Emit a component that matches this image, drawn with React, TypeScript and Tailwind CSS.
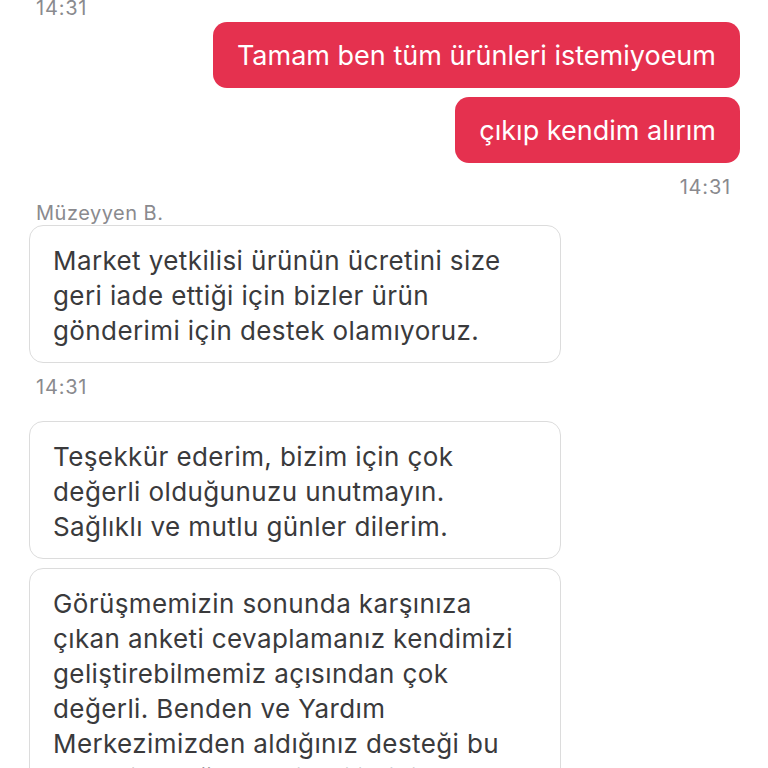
import React from "react";

const font = { fontFamily: "Inter, 'Noto Sans', sans-serif" };

const Outgoing: React.FC<{ text: string }> = ({ text }) => (
  <div className="flex justify-end pr-[28px]">
    <div className="rounded-[14px] bg-[#e5314f] px-[24px] h-[66px] flex items-center text-[27px] leading-none text-white">
      {text}
    </div>
  </div>
);

const Incoming: React.FC<{ lines: string[] }> = ({ lines }) => (
  <div className="pl-[29px] w-[561px]">
    <div className="rounded-[14px] border-[1.5px] border-[#dcdcdc] bg-white pl-[23px] pt-[17px] pb-[14px] text-[26px] leading-[35px] tracking-[0.4px] text-[#3a3a3c]">
      {lines.map((l, i) => (
        <div key={i} className="whitespace-nowrap">
          {l}
        </div>
      ))}
    </div>
  </div>
);

const Time: React.FC<{ right?: boolean }> = ({ right }) => (
  <div
    className={`text-[20px] leading-[24px] tracking-[0.8px] text-[#8a8a8e] ${
      right ? "text-right pr-[37px]" : "pl-[36px]"
    }`}
  >
    14:31
  </div>
);

export default function App() {
  return (
    <div className="w-[768px] h-[768px] overflow-hidden bg-white" style={font}>
      <div className="-mt-[4px]">
        <Time />
        <div className="mt-[2px] flex flex-col gap-[9px]">
          <Outgoing text="Tamam ben tüm ürünleri istemiyoeum" />
          <Outgoing text="çıkıp kendim alırım" />
        </div>
        <div className="mt-[12px]">
          <Time right />
        </div>
        <div className="mt-[2px] pl-[36px] text-[20px] leading-[24px] tracking-[0.5px] text-[#8a8a8e]">
          Müzeyyen B.
        </div>
        <div className="mt-[0px]">
          <Incoming
            lines={[
              "Market yetkilisi ürünün ücretini size",
              "geri iade ettiği için bizler ürün",
              "gönderimi için destek olamıyoruz.",
            ]}
          />
        </div>
        <div className="mt-[12px]">
          <Time />
        </div>
        <div className="mt-[22px] flex flex-col gap-[9px]">
          <Incoming
            lines={[
              "Teşekkür ederim, bizim için çok",
              "değerli olduğunuzu unutmayın.",
              "Sağlıklı ve mutlu günler dilerim.",
            ]}
          />
          <Incoming
            lines={[
              "Görüşmemizin sonunda karşınıza",
              "çıkan anketi cevaplamanız kendimizi",
              "geliştirebilmemiz açısından çok",
              "değerli. Benden ve Yardım",
              "Merkezimizden aldığınız desteği bu",
              "anket ile değerlendirebilirsiniz.",
            ]}
          />
        </div>
      </div>
    </div>
  );
}
